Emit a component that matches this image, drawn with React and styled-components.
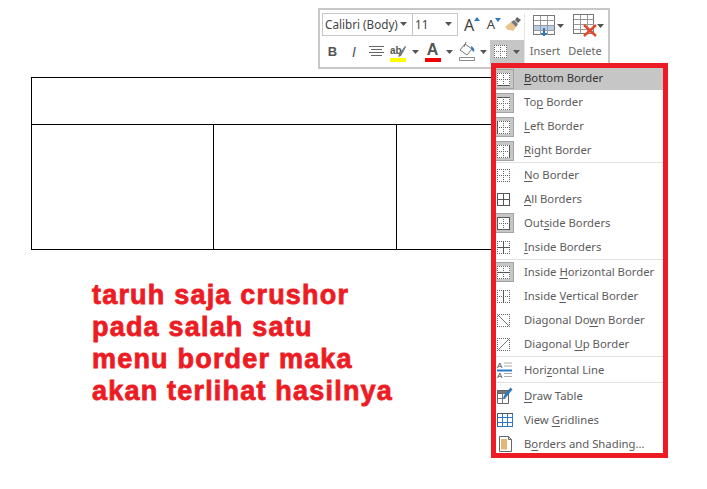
import React from 'react';
import styled, { createGlobalStyle } from 'styled-components';

const Global = createGlobalStyle`
  html, body {
    margin: 0;
    padding: 0;
    background: #fff;
  }
`;

const Page = styled.div`
  position: relative;
  width: 707px;
  height: 489px;
  overflow: hidden;
  padding: 77px 0 0 31px;
  box-sizing: border-box;
  background: #fff;
`;

const Sheet = styled.table`
  border-collapse: collapse;
  table-layout: fixed;
  width: 549px;
  & td {
    border: 1px solid #000;
    padding: 0;
  }
  & tr:first-child td {
    height: 46px;
  }
  & tr:last-child td {
    height: 124px;
  }
`;

const Col = styled.col`
  width: ${p => p.$w}px;
`;

const Caption = styled.div`
  margin: 29px 0 0 61px;
  color: #ed1c24;
  font-family: 'Liberation Sans', sans-serif;
  font-weight: 700;
  font-size: 27px;
  line-height: 32px;
  letter-spacing: 1.2px;
  -webkit-text-stroke: 0.8px #ed1c24;
  white-space: nowrap;
`;

const Toolbar = styled.div`
  position: absolute;
  left: 318px;
  top: 8px;
  width: 292px;
  height: 61px;
  box-sizing: border-box;
  padding: 3px 2px 0 2px;
  background: #fff;
  border: 2px solid #c8c8c8;
  display: flex;
  font-family: 'Noto Sans', sans-serif;
  color: #444;
`;

const Left = styled.div`
  width: 202px;
  display: flex;
  flex-direction: column;
  gap: 4px;
`;

const Row = styled.div`
  display: flex;
  height: 23px;
  align-items: center;
`;

const Combo = styled.div`
  width: ${p => p.$w}px;
  height: 23px;
  box-sizing: border-box;
  border: 1px solid #c6c6c6;
  margin-left: ${p => p.$ml || 0}px;
  display: flex;
  align-items: center;
  justify-content: space-between;
  padding: 0 5px 2px 2px;
  font-size: 11.7px;
  color: #444;
`;

const Tool = styled.div`
  width: ${p => p.$w}px;
  height: 23px;
  flex: none;
  display: flex;
  align-items: center;
  justify-content: center;
  background: ${p => (p.$on ? '#c6c6c6' : 'transparent')};
  gap: ${p => p.$gap || 0}px;
`;

const Glyph = styled.span`
  font-family: 'Liberation Sans', sans-serif;
  font-size: ${p => p.$size}px;
  font-weight: ${p => (p.$bold ? 700 : 400)};
  font-style: ${p => (p.$italic ? 'italic' : 'normal')};
  color: #555;
  line-height: 1;
`;

const GrowLetter = styled.span`
  position: relative;
  display: inline-block;
  font-family: 'Noto Sans', sans-serif;
  font-size: ${p => p.$size}px;
  color: #444;
  line-height: 1;
  & svg {
    position: absolute;
    top: 0;
    right: -6px;
  }
`;

const Swatch = styled.div`
  width: ${p => p.$w || 16}px;
  height: 4px;
  background: ${p => p.$color};
`;

const Stack = styled.div`
  display: flex;
  flex-direction: column;
  align-items: center;
  height: 23px;
  justify-content: flex-end;
  padding-bottom: 1px;
  box-sizing: border-box;
`;

const Rule = styled.div`
  width: 1px;
  height: 52px;
  background: #e6e6e6;
  margin-right: 1px;
`;

const TableTool = styled.div`
  width: ${p => p.$w}px;
  display: flex;
  flex-direction: column;
  align-items: center;
  gap: 4px;
`;

const TableIcon = styled.div`
  align-self: flex-start;
  height: 23px;
  display: flex;
  align-items: center;
  gap: ${p => p.$gap}px;
  padding: 1px 0 0 7px;
`;

const ToolLabel = styled.div`
  font-size: 11px;
  line-height: 16px;
  color: #666;
  padding: 2px 2px 0 0;
`;

const Menu = styled.div`
  position: absolute;
  left: 491px;
  top: 63px;
  width: 177px;
  height: 395px;
  box-sizing: border-box;
  border: 5px solid #ed1c24;
  background: #fff;
  overflow: hidden;
  font-family: 'Noto Sans', sans-serif;
`;

const Group = styled.div`
  display: flex;
  flex-direction: column;
  gap: 2px;
`;

const Sep = styled.div`
  height: 1px;
  background: #e1e1e1;
  margin: ${p => p.$top}px 0 ${p => p.$bottom}px;
`;

const Item = styled.div`
  height: 22px;
  flex: none;
  display: flex;
  align-items: center;
  background: ${p => (p.$hot ? '#c6c6c6' : 'transparent')};
  color: ${p => (p.$hot ? '#333' : '#5c5c5c')};
  font-size: 11.3px;
  white-space: nowrap;
  & u {
    text-underline-offset: 2px;
  }
`;

const ItemText = styled.span`
  padding-bottom: ${p => (p.$lift ? 4 : 2)}px;
`;

const IconBox = styled.div`
  width: 18px;
  height: 20px;
  margin-right: 10px;
  flex: none;
  box-sizing: border-box;
  display: flex;
  align-items: center;
  padding-left: 1px;
  background: ${p => (p.$on ? '#c6c6c6' : 'transparent')};
  border: ${p => (p.$on ? '1px solid #a3a3a3' : 'none')};
  border-left: none;
`;

// little table-with-dots icon, solid lines given by `lines`
const BorderIcon = ({ lines = '', fill }) => {
  const has = k => lines.split(' ').includes(k);
  const diagonal = has('down') || has('up');
  const solid = { stroke: '#555', strokeWidth: 1 };
  const dots = { stroke: '#666', strokeWidth: 1, strokeDasharray: '1 1' };
  const line = (k, x1, y1, x2, y2) => (
    <line x1={x1} y1={y1} x2={x2} y2={y2} {...(has(k) ? solid : dots)} />
  );
  return (
    <svg width="13" height="13" viewBox="0 0 13 13" shapeRendering="crispEdges">
      {fill && <rect width="13" height="13" fill="#fff" />}
      {line('top', 0, 0.5, 13, 0.5)}
      {line('bottom', 0, 12.5, 13, 12.5)}
      {line('left', 0.5, 0, 0.5, 13)}
      {line('right', 12.5, 0, 12.5, 13)}
      {!diagonal && line('h', 0, 6.5, 13, 6.5)}
      {!diagonal && line('v', 6.5, 0, 6.5, 13)}
      {has('down') && <line x1="0" y1="0" x2="13" y2="13" stroke="#777" shapeRendering="auto" />}
      {has('up') && <line x1="0" y1="13" x2="13" y2="0" stroke="#777" shapeRendering="auto" />}
    </svg>
  );
};

const Caret = () => (
  <svg width="7" height="4" viewBox="0 0 7 4">
    <path d="M0 0h7L3.5 4z" fill="#555" />
  </svg>
);

const LineIcon = () => (
  <svg width="15" height="18" viewBox="0 0 15 18">
    <text x="0" y="7" fontSize="8" fontFamily="Liberation Sans" fill="#444">A</text>
    <text x="0" y="17" fontSize="8" fontFamily="Liberation Sans" fill="#444">A</text>
    <path d="M7 2h8M7 5h8M7 12.5h8M7 15.5h8" stroke="#aaa" />
    <path d="M0 9.5h15" stroke="#2b79c2" strokeWidth="2" />
  </svg>
);

const DrawIcon = () => (
  <svg width="16" height="18" viewBox="0 0 16 18">
    <path d="M.5 3.5h11v13H.5z" fill="#fff" stroke="#666" />
    <path d="M.5 3.5h11v3H.5z" fill="#777" stroke="#666" />
    <path d="M.5 11.5h8M5.5 6.5v10" stroke="#777" />
    <path d="M6 11.5l1-3 6.5-8 2 2-6.5 8z" fill="#2b79c2" />
  </svg>
);

const GridIcon = () => (
  <svg width="16" height="14" viewBox="0 0 16 14" shapeRendering="crispEdges">
    <path d="M.5 .5h15v13H.5z" fill="#fff" stroke="#2b79c2" />
    <path d="M5.5 .5v13M10.5 .5v13M.5 4.5h15M.5 9.5h15" stroke="#2b79c2" />
    <path d="M.5 .5v13M.5 .5h15" stroke="#555" />
  </svg>
);

const ShadeIcon = () => (
  <svg width="15" height="16" viewBox="0 0 15 16">
    <path d="M2.5 .5h9l3 3v12h-12z" fill="#fff" stroke="#666" />
    <rect x="4" y="3" width="6" height="10.5" fill="#e3b777" />
    <path d="M11.5 .5v3h3" fill="none" stroke="#666" />
  </svg>
);

const groups = [
  [
    { pre: '', key: 'B', post: 'ottom Border', lines: 'bottom', on: true, hot: true },
    { pre: 'To', key: 'p', post: ' Border', lines: 'top', on: true },
    { pre: '', key: 'L', post: 'eft Border', lines: 'left', on: true },
    { pre: '', key: 'R', post: 'ight Border', lines: 'right', on: true },
  ],
  [
    { pre: '', key: 'N', post: 'o Border', lines: '' },
    { pre: '', key: 'A', post: 'll Borders', lines: 'top bottom left right h v' },
    { pre: 'Out', key: 's', post: 'ide Borders', lines: 'top bottom left right', on: true },
    { pre: '', key: 'I', post: 'nside Borders', lines: 'h v' },
  ],
  [
    { pre: 'Inside ', key: 'H', post: 'orizontal Border', lines: 'h', on: true },
    { pre: 'Inside ', key: 'V', post: 'ertical Border', lines: 'v' },
    { pre: 'Diagonal Do', key: 'w', post: 'n Border', lines: 'down' },
    { pre: 'Diagonal ', key: 'U', post: 'p Border', lines: 'up' },
  ],
  [{ pre: 'Hori', key: 'z', post: 'ontal Line', icon: <LineIcon /> }],
  [
    { pre: '', key: 'D', post: 'raw Table', icon: <DrawIcon /> },
    { pre: 'View ', key: 'G', post: 'ridlines', icon: <GridIcon /> },
    { pre: 'B', key: 'o', post: 'rders and Shading...', icon: <ShadeIcon /> },
  ],
];

const gaps = [
  [0, 1],
  [1, 1],
  [1, 2],
  [1, 2],
];

const MenuRow = ({ row, lift }) => (
  <Item $hot={row.hot}>
    <IconBox $on={row.on}>
      {row.icon || <BorderIcon lines={row.lines} fill={row.on} />}
    </IconBox>
    <ItemText $lift={lift}>
      {row.pre}
      <u>{row.key}</u>
      {row.post}
    </ItemText>
  </Item>
);

export default function App() {
  return (
    <Page>
      <Global />
      <Sheet>
        <colgroup>
          <Col $w={182} />
          <Col $w={183} />
          <Col $w={184} />
        </colgroup>
        <tbody>
          <tr>
            <td colSpan={3} />
          </tr>
          <tr>
            <td />
            <td />
            <td />
          </tr>
        </tbody>
      </Sheet>

      <Caption>
        taruh saja crushor
        <br />
        pada salah satu
        <br />
        menu border maka
        <br />
        akan terlihat hasilnya
      </Caption>

      <Toolbar>
        <Left>
          <Row>
            <Combo $w={91}>
              Calibri (Body) <Caret />
            </Combo>
            <Combo $w={46} $ml={-1}>
              11 <Caret />
            </Combo>
            <Tool $w={22}>
              <GrowLetter $size={16}>
                A
                <svg width="6" height="4" viewBox="0 0 6 4">
                  <path d="M0 4l3-4 3 4z" fill="#2b79c2" />
                </svg>
              </GrowLetter>
            </Tool>
            <Tool $w={22}>
              <GrowLetter $size={13}>
                A
                <svg width="6" height="4" viewBox="0 0 6 4">
                  <path d="M0 0l3 4 3-4z" fill="#2b79c2" />
                </svg>
              </GrowLetter>
            </Tool>
            <Tool $w={22}>
              <svg width="17" height="15" viewBox="0 0 17 15">
                <path d="M0 10l6-5 5 5-3 4-3-1-2 0z" fill="#e8c48a" />
                <path d="M6 5l5 5 2-3-4-4z" fill="#777" />
                <path d="M10 3l2-3 4 3-3 3z" fill="#666" />
              </svg>
            </Tool>
          </Row>
          <Row>
            <Tool $w={21}>
              <Glyph $size={13} $bold>B</Glyph>
            </Tool>
            <Tool $w={22}>
              <Glyph $size={14} $italic>I</Glyph>
            </Tool>
            <Tool $w={23}>
              <svg width="15" height="11" viewBox="0 0 15 11">
                <path d="M0 .5h15M2 3.5h11M0 6.5h15M2 9.5h11" stroke="#666" />
              </svg>
            </Tool>
            <Tool $w={20}>
              <Stack>
                <svg width="16" height="13" viewBox="0 0 16 13">
                  <text x="0" y="9" fontSize="10" fontFamily="Liberation Sans" fontWeight="700" fill="#555">ab</text>
                  <path d="M8 12l1-3 6-8 1 1-5 9z" fill="#777" />
                </svg>
                <Swatch $color="#ffff00" />
              </Stack>
            </Tool>
            <Tool $w={14}><Caret /></Tool>
            <Tool $w={21}>
              <Stack>
                <Glyph $size={16} $bold>A</Glyph>
                <Swatch $color="#f00000" />
              </Stack>
            </Tool>
            <Tool $w={13}><Caret /></Tool>
            <Tool $w={21}>
              <svg width="16" height="19" viewBox="0 0 16 19">
                <path d="M1 8l5-6 7 5-5 6z" fill="#fff" stroke="#777" />
                <path d="M5 5l2-5" stroke="#777" />
                <path d="M12 4c2 1 4 3 3 6-2-1-3-3-3-6z" fill="#2b79c2" />
                <path d="M.5 15.5h15v3H.5z" fill="#fff" stroke="#888" />
              </svg>
            </Tool>
            <Tool $w={13}><Caret /></Tool>
            <Tool $w={34} $on $gap={6}>
              <BorderIcon lines="" fill />
              <Caret />
            </Tool>
          </Row>
        </Left>
        <Rule />
        <TableTool $w={41}>
          <TableIcon $gap={2}>
            <svg width="22" height="22" viewBox="0 0 22 22" shapeRendering="crispEdges">
              <path d="M.5 .5h21v19H.5z" fill="#fff" stroke="#777" />
              <path d="M1 10h20v5H1z" fill="#b9cde5" />
              <path d="M7.5 .5v19M14.5 .5v19M.5 5.5h21M.5 10.5h21M.5 15.5h21" stroke="#999" />
              <path d="M11 13v6" stroke="#2b79c2" strokeWidth="2" />
              <path d="M7.5 17.5h7L11 22z" fill="#2b79c2" />
            </svg>
            <Caret />
          </TableIcon>
          <ToolLabel>Insert</ToolLabel>
        </TableTool>
        <TableTool $w={41}>
          <TableIcon $gap={0}>
            <svg width="24" height="23" viewBox="0 0 24 23">
              <g shapeRendering="crispEdges">
                <path d="M.5 .5h20v19H.5z" fill="#fff" stroke="#777" />
                <path d="M7.5 .5v19M14.5 .5v19M.5 5.5h20M.5 10.5h20M.5 15.5h20" stroke="#999" />
              </g>
              <path d="M11 11l12 11M23 11L11 22" stroke="#e2492b" strokeWidth="2.4" />
            </svg>
            <Caret />
          </TableIcon>
          <ToolLabel>Delete</ToolLabel>
        </TableTool>
      </Toolbar>

      <Menu>
        {groups.map((rows, i) => (
          <React.Fragment key={i}>
            <Group>
              {rows.map(row => (
                <MenuRow key={row.key + row.post} row={row} lift={i === 0} />
              ))}
            </Group>
            {gaps[i] && <Sep $top={gaps[i][0]} $bottom={gaps[i][1]} />}
          </React.Fragment>
        ))}
      </Menu>
    </Page>
  );
}
